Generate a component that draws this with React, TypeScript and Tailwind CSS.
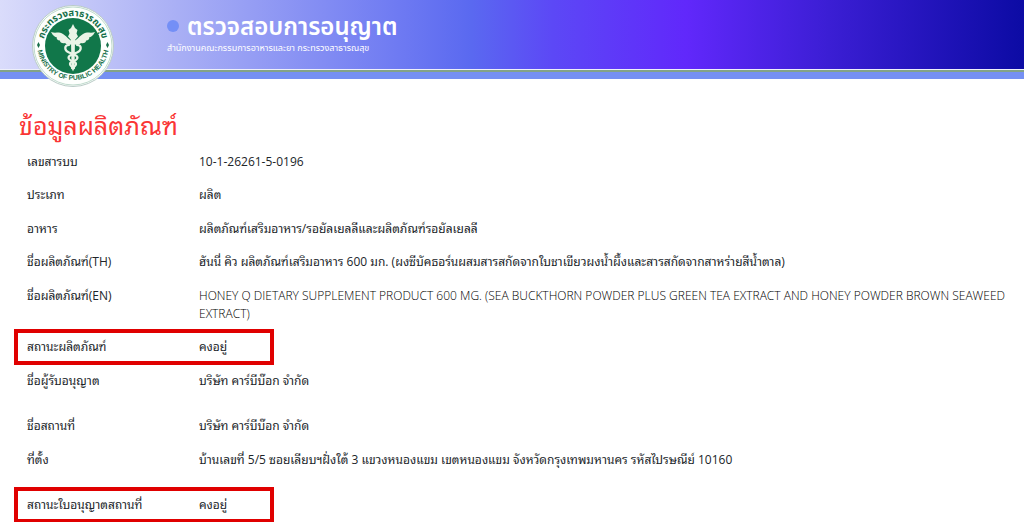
import React from 'react';

interface Field {
  label: string;
  value: string;
  latin?: boolean;
  highlighted?: boolean;
  spaced?: boolean;
}

const fields: Field[] = [
  { label: 'เลขสารบบ', value: '10-1-26261-5-0196' },
  { label: 'ประเภท', value: 'ผลิต' },
  { label: 'อาหาร', value: 'ผลิตภัณฑ์เสริมอาหาร/รอยัลเยลลีและผลิตภัณฑ์รอยัลเยลลี' },
  { label: 'ชื่อผลิตภัณฑ์(TH)', value: 'ฮันนี่ คิว ผลิตภัณฑ์เสริมอาหาร 600 มก. (ผงซีบัคธอร์นผสมสารสกัดจากใบชาเขียวผงน้ำผึ้งและสารสกัดจากสาหร่ายสีน้ำตาล)' },
  { label: 'ชื่อผลิตภัณฑ์(EN)', value: 'HONEY Q DIETARY SUPPLEMENT PRODUCT 600 MG. (SEA BUCKTHORN POWDER PLUS GREEN TEA EXTRACT AND HONEY POWDER BROWN SEAWEED EXTRACT)', latin: true },
  { label: 'สถานะผลิตภัณฑ์', value: 'คงอยู่', highlighted: true },
  { label: 'ชื่อผู้รับอนุญาต', value: 'บริษัท คาร์บีบ๊อก จำกัด' },
  { label: 'ชื่อสถานที่', value: 'บริษัท คาร์บีบ๊อก จำกัด', spaced: true },
  { label: 'ที่ตั้ง', value: 'บ้านเลขที่ 5/5 ซอยเลียบฯฝั่งใต้ 3 แขวงหนองแขม เขตหนองแขม จังหวัดกรุงเทพมหานคร รหัสไปรษณีย์ 10160' },
  { label: 'สถานะใบอนุญาตสถานที่', value: 'คงอยู่', highlighted: true, spaced: true },
];

const MinistrySeal: React.FC = () => (
  <svg viewBox="0 0 84 84" className="h-[84px] w-[84px]" role="img" aria-label="Ministry of Public Health">
    <defs>
      <path id="seal-top" d="M12 42a30 30 0 0 1 60 0" />
      <path id="seal-bottom" d="M6 40a36 36 0 0 0 72 0" />
    </defs>
    <circle cx="42" cy="42" r="40.500" fill="#fdfffd" stroke="#b9cbc6" strokeWidth="1" />
    <circle cx="42" cy="42" r="39" fill="none" stroke="#7fb59a" strokeWidth="0.500" />
    <circle cx="42" cy="42" r="28" fill="#11774a" />
    <g fill="#17704a" fontWeight="bold">
      <text fontSize="9.500" textAnchor="middle">
        <textPath href="#seal-top" startOffset="50%">กระทรวงสาธารณสุข</textPath>
      </text>
      <text fontSize="6.800" textAnchor="middle" fontFamily="Liberation Sans, sans-serif">
        <textPath href="#seal-bottom" startOffset="50%">MINISTRY OF PUBLIC HEALTH</textPath>
      </text>
    </g>
    <path d="M7.500 38l1.500 3-1.500 3-1.500-3zM76.500 38l1.500 3-1.500 3-1.500-3z" fill="#17704a" />
    <g fill="#e9f4e6">
      {/* wings */}
      <path d="M41 37C37 36 34 29 28 28.500C25 28.500 23 29 20 28C22 32 24 33 26 33.500C25 35 27 36.500 29 36.500C28.500 38.500 32 40 34 39C36 41.500 40 41 41 40Z" />
      <path d="M43 37C47 36 50 29 56 28.500C59 28.500 61 29 64 28C62 32 60 33 58 33.500C59 35 57 36.500 55 36.500C55.500 38.500 52 40 50 39C48 41.500 44 41 43 40Z" />
      {/* torch */}
      <path d="M42 20l2 4 2.500 2-1 3.500 1.500 3-3 3.500-0.500 28L42 67.500l-1.500-3.500L40 36l-3-3.500 1.500-3-1-3.500 2.500-2z" />
    </g>
    <g fill="none" stroke="#e9f4e6" strokeWidth="2.200" strokeLinecap="round">
      <path d="M38 41C33 41 33 46.500 38 48.500C43 50.500 48 52 46 55C44 58 39 57 39 60C39 62 41 63 43 64" />
      <path d="M46 41C51 41 51 46.500 46 48.500C41 50.500 36 52 38 55C40 58 45 57 45 60C45 62 43 63 41 64" />
    </g>
  </svg>
);

const FieldRow: React.FC<{ field: Field }> = ({ field }) => (
  <div
    className={`relative grid grid-cols-[172px_1fr] pt-2 odd:pb-[7px] even:pb-2 ${field.spaced ? 'mt-3' : ''}`}
  >
    <dt>{field.label}</dt>
    <dd className={field.latin ? 'font-light text-black' : ''}>{field.value}</dd>
    {field.highlighted && (
      <span className="pointer-events-none absolute -top-px -bottom-px -left-[13px] w-[260px] border-4 border-[#e00000]" />
    )}
  </div>
);

const App: React.FC = () => {
  return (
    <div className="bg-white font-['Open_Sans','Noto_Sans_Thai_Looped',sans-serif] text-[#212529]">
      <header className="relative font-['Open_Sans','Noto_Sans_Thai',sans-serif]">
        <div className="bg-[linear-gradient(to_right,#dadcfb_0%,#aab0f5_17%,#6e7af2_39%,#5a69f0_46%,#5c48f6_54%,#6128fb_67%,#3b1ed4_81%,#0c0ba4_100%)] pt-3 pb-[13px] pl-[167px] text-white">
          <h1 className="flex items-center gap-2 text-2xl leading-7 font-semibold">
            <span className="h-3 w-3 rounded-full bg-[#748ff6]" />
            ตรวจสอบการอนุญาต
          </h1>
          <p className="text-[9px] leading-4">สำนักงานคณะกรรมการอาหารและยา กระทรวงสาธารณสุข</p>
        </div>
        <div className="h-px bg-[#eef0fa]" />
        <div className="h-0.5 bg-[#83a387]" />
        <div className="h-[7px] bg-[#7590f3]" />
        <div className="absolute top-1 left-[31px]">
          <MinistrySeal />
        </div>
      </header>

      <main className="pt-7 pr-2 pl-[27px]">
        <h2 className="-ml-2 pb-[2px] text-[25px] leading-9 text-[#fa3535]">ข้อมูลผลิตภัณฑ์</h2>
        <dl className="text-xs leading-[18px]">
          {fields.map((field) => (
            <FieldRow key={field.label} field={field} />
          ))}
        </dl>
      </main>
    </div>
  );
};

export default App;
